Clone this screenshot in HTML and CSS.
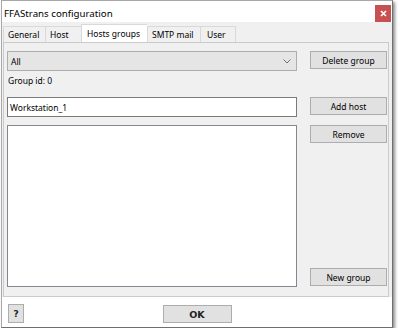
FILE: index.html
```html
<!DOCTYPE html>
<html>
<head>
<meta charset="utf-8">
<link rel="stylesheet" href="styles.css">
</head>
<body>
<div class="window">
  <div class="titlebar">
    <span class="title">FFAStrans configuration</span>
    <span class="close"><svg width="7" height="7" viewBox="0 0 7 7"><path d="M1 1L6 6M6 1L1 6" stroke="#fff" stroke-width="1.6"/></svg></span>
  </div>
  <div class="tabarea">
    <div class="tabstrip">
      <div class="tab t-general">General</div>
      <div class="tab t-host">Host</div>
      <div class="tab active t-groups">Hosts groups</div>
      <div class="tab t-smtp">SMTP mail</div>
      <div class="tab t-user">User</div>
    </div>
    <div class="panel">
      <div class="left">
        <div class="combo"><span>All</span><svg class="chev" width="8" height="5" viewBox="0 0 8 5"><path d="M0.5 0.5L4 4L7.5 0.5" fill="none" stroke="#707070" stroke-width="1"/></svg></div>
        <div class="label">Group id: 0</div>
        <div class="input">Workstation_1</div>
        <div class="listbox"></div>
      </div>
      <div class="right">
        <div class="btn">Delete group</div>
        <div class="btn add">Add host</div>
        <div class="btn remove">Remove</div>
        <div class="btn newgroup">New group</div>
      </div>
    </div>
  </div>
  <div class="footer">
    <div class="btn help">?</div>
    <div class="btn ok">OK</div>
    <div></div>
  </div>
</div>
</body>
</html>
```
FILE: styles.css
```css
* { box-sizing: border-box; }
body {
  margin: 0;
  background: #ffffff;
  font-family: "Noto Sans", "Liberation Sans", sans-serif;
  font-size: 8.5px;
  color: #000;
}
.window {
  margin-left: 1px;
  width: 392px;
  height: 328px;
  border: 1px solid #a8a8a8;
  border-right-color: #6f6f6f;
  border-bottom-color: #6f6f6f;
  box-shadow: 2px 2px 3px rgba(0,0,0,0.45);
  display: flex;
  flex-direction: column;
  background: #fff;
}
.titlebar {
  height: 21px;
  display: flex;
  align-items: center;
  justify-content: space-between;
  padding-left: 2px;
  padding-right: 1px;
  background: #fff;
}
.title {
  font-size: 9.7px;
  padding-top: 3px;
}
.close {
  width: 16px;
  height: 17px;
  margin-top: 3px;
  background: #c75050;
  display: flex;
  align-items: center;
  justify-content: center;
}
.tabarea {
  background: #f0f0f0;
  padding: 0 2px 0 1px;
  display: flex;
  flex-direction: column;
}
.tabstrip {
  height: 20px;
  padding-top: 2px;
  display: flex;
  align-items: flex-end;
}
.tab {
  height: 16px;
  padding: 0 0 0 4px;
  border: 1px solid #d9d9d9;
  border-bottom: none;
  border-right: none;
  background: #f0f0f0;
  display: flex;
  align-items: center;
  white-space: nowrap;
  overflow: hidden;
}
.t-general { width: 42px; }
.t-host { width: 36px; }
.t-groups { width: 66px; }
.t-smtp { width: 53px; }
.t-user { width: 36px; border-right: 1px solid #d9d9d9; padding-left: 6px; }
.tab.active {
  height: 18px;
  background: #fff;
  padding-left: 5px;
}
.panel {
  height: 255px;
  width: 386px;
  border: 1px solid #cacaca;
  background: #f0f0f0;
  padding: 8px 1px 9px 3px;
  display: grid;
  grid-template-columns: 290px 77px;
  column-gap: 13px;
}
.left {
  display: flex;
  flex-direction: column;
}
.combo {
  height: 20px;
  border: 1px solid #adadad;
  background: #e5e5e5;
  display: flex;
  align-items: center;
  justify-content: space-between;
  padding: 0 5px 0 3px;
}
.chev { margin-top: 1px; }
.label {
  height: 26px;
  padding-top: 4px;
  line-height: 12px;
  padding-left: 1px;
}
.input {
  height: 20px;
  border: 1px solid #7a7a7a;
  background: #fff;
  padding-left: 2px;
  display: flex;
  align-items: center;
}
.listbox {
  margin-top: 8px;
  height: 162px;
  border: 1px solid #828790;
  background: #fff;
}
.right {
  display: flex;
  flex-direction: column;
}
.btn {
  height: 18px;
  border: 1px solid #adadad;
  background: #e1e1e1;
  display: flex;
  align-items: center;
  justify-content: center;
  white-space: nowrap;
}
.add { margin-top: 28px; }
.remove { margin-top: 10px; }
.newgroup { margin-top: auto; margin-bottom: 1px; }
.footer {
  height: 30px;
  background: #fff;
  padding-top: 7px;
  display: grid;
  grid-template-columns: 1fr 69px 1fr;
  align-items: start;
}
.help {
  width: 16px;
  height: 19px;
  margin-left: 6px;
  justify-self: start;
  font-family: "DejaVu Sans", sans-serif;
  font-weight: bold;
  font-size: 9px;
  color: #222;
}
.ok {
  height: 18px;
  margin-top: 1px;
  font-family: "DejaVu Sans", sans-serif;
  font-weight: bold;
  font-size: 9.5px;
  color: #222;
}
```
